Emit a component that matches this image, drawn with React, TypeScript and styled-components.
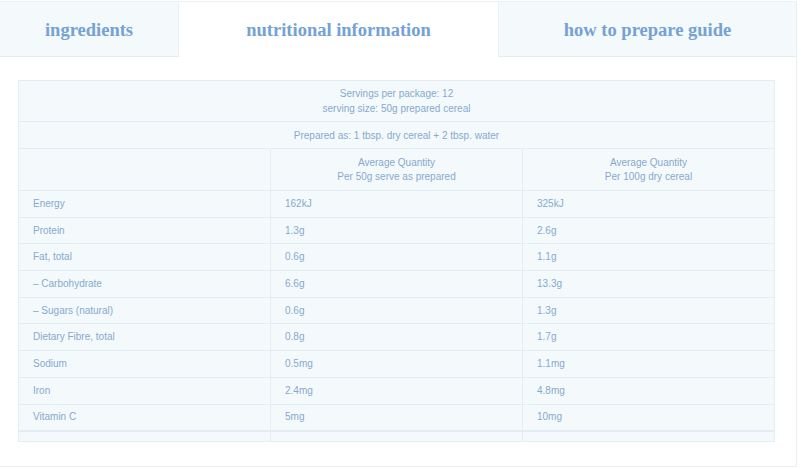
import React, {useState} from "react";
import styled, {createGlobalStyle, css} from "styled-components";

const GlobalStyle = createGlobalStyle`
  html, body {
    margin: 0;
    padding: 0;
    background: #ffffff;
  }
`

const Panel = styled.div`
  width: 796px;
  margin-top: 1px;
  border-top: 1px solid #eef2f5;
  border-right: 1px solid #e9eef2;
  border-bottom: 1px solid #e9eef2;
  background: #ffffff;
`

const TabBar = styled.div`
  display: flex;
  height: 55px;
`

const Tab = styled.button<{$active: boolean; $width: number}>`
  flex: ${props => props.$width ? `0 0 ${props.$width}px` : '1 1 auto'};
  display: flex;
  align-items: center;
  justify-content: center;
  padding: 2px 0 0;
  border: 0;
  font-family: "Liberation Serif", "Times New Roman", serif;
  font-weight: bold;
  font-size: 18.5px;
  color: #74a2d4;
  cursor: pointer;
  ${props => props.$active
    ? css`background: #ffffff;`
    : css`
      background: #f4f9fc;
      border-bottom: 1px solid #e6edf2;
    `}
  & + & {
    border-left: 1px solid #eaf0f4;
  }
`

const Body = styled.div`
  padding: 23px 21px 24px 18px;
`

const Table = styled.table`
  width: 100%;
  border-collapse: collapse;
  background: #f4f9fc;
  border: 1px solid #dfeaf1;
  font-family: "Liberation Sans", Arial, sans-serif;
  font-size: 10px;
  color: #86a9d0;
  table-layout: fixed;
`

const Cell = styled.td<{$center?: boolean}>`
  border: 1px solid #e4edf3;
  padding: 0 14px;
  height: 25.7px;
  text-align: ${props => props.$center ? 'center' : 'left'};
  vertical-align: middle;
  line-height: 14px;
`

const HeadCell = styled(Cell)<{$tall?: boolean}>`
  padding: ${props => props.$tall ? '5px 14px' : '1px 14px 0'};
  height: auto;
  line-height: ${props => props.$tall ? '15px' : '25px'};
`

const ColHead = styled(Cell)`
  height: auto;
  padding: 7px 14px 6px;
  line-height: 14px;
`

const Spacer = styled.td`
  border: 1px solid #e4edf3;
  border-top-width: 2px;
  height: 9px;
  padding: 0;
`

type Nutrient = { name: string; serve: string; per100: string }

const nutrients: Nutrient[] = [
  {name: "Energy", serve: "162kJ", per100: "325kJ"},
  {name: "Protein", serve: "1.3g", per100: "2.6g"},
  {name: "Fat, total", serve: "0.6g", per100: "1.1g"},
  {name: "\u2013 Carbohydrate", serve: "6.6g", per100: "13.3g"},
  {name: "\u2013 Sugars (natural)", serve: "0.6g", per100: "1.3g"},
  {name: "Dietary Fibre, total", serve: "0.8g", per100: "1.7g"},
  {name: "Sodium", serve: "0.5mg", per100: "1.1mg"},
  {name: "Iron", serve: "2.4mg", per100: "4.8mg"},
  {name: "Vitamin C", serve: "5mg", per100: "10mg"},
]

const tabs = [
  {label: "ingredients", width: 178},
  {label: "nutritional information", width: 320},
  {label: "how to prepare guide", width: 0},
]

export default function App(): React.JSX.Element {
  const [active, setActive] = useState(1)

  return (
    <>
      <GlobalStyle/>
      <Panel>
        <TabBar>
          {tabs.map((t, i) => (
            <Tab key={t.label} $active={active === i} $width={t.width} onClick={() => setActive(i)}>
              {t.label}
            </Tab>
          ))}
        </TabBar>
        <Body>
          <Table>
            <tbody>
              <tr>
                <HeadCell colSpan={3} $center $tall>
                  Servings per package: 12<br/>serving size: 50g prepared cereal
                </HeadCell>
              </tr>
              <tr>
                <HeadCell colSpan={3} $center>
                  Prepared as: 1 tbsp. dry cereal + 2 tbsp. water
                </HeadCell>
              </tr>
              <tr>
                <ColHead/>
                <ColHead $center>Average Quantity<br/>Per 50g serve as prepared</ColHead>
                <ColHead $center>Average Quantity<br/>Per 100g dry cereal</ColHead>
              </tr>
              {nutrients.map(n => (
                <tr key={n.name}>
                  <Cell>{n.name}</Cell>
                  <Cell>{n.serve}</Cell>
                  <Cell>{n.per100}</Cell>
                </tr>
              ))}
              <tr>
                <Spacer/>
                <Spacer/>
                <Spacer/>
              </tr>
            </tbody>
          </Table>
        </Body>
      </Panel>
    </>
  )
}
